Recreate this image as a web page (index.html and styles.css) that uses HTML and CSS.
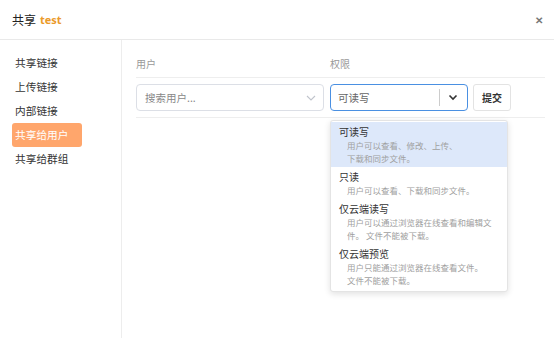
FILE: index.html
```html
<!DOCTYPE html>
<html lang="zh">
<head>
    <meta charset="UTF-8">
    <title>共享</title>
    <link rel="stylesheet" href="styles.css">
</head>
<body>
    <div class="dialog">
        <div class="dialog-head">
            <span class="title">共享</span>
            <span class="name">test</span>
            <span class="close">&#x2715;</span>
        </div>
        <div class="dialog-body">
            <ul class="side">
                <li>共享链接</li>
                <li>上传链接</li>
                <li>内部链接</li>
                <li class="active">共享给用户</li>
                <li>共享给群组</li>
            </ul>
            <div class="main">
                <div class="row head-row">
                    <span class="col-user">用户</span>
                    <span class="col-perm">权限</span>
                </div>
                <div class="row input-row">
                    <div class="col-user user-input">
                        <span>搜索用户...</span>
                        <svg width="10" height="6" viewBox="0 0 10 6"><path d="M1 1l4 4 4-4" fill="none" stroke="#c0c4cc" stroke-width="1.1"/></svg>
                    </div>
                    <div class="col-perm perm-select">
                        <span class="value">可读写</span>
                        <span class="sep"></span>
                        <svg width="10" height="7" viewBox="0 0 10 7"><path d="M1.5 1.5l3.5 3.5 3.5-3.5" fill="none" stroke="#333" stroke-width="1.6"/></svg>
                    </div>
                    <button type="button" class="submit">提交</button>
                </div>
                <ul class="menu">
                    <li class="selected">
                        <div class="opt">可读写</div>
                        <div class="desc">用户可以查看、修改、上传、<br>下载和同步文件。</div>
                    </li>
                    <li>
                        <div class="opt">只读</div>
                        <div class="desc">用户可以查看、下载和同步文件。</div>
                    </li>
                    <li>
                        <div class="opt">仅云端读写</div>
                        <div class="desc">用户可以通过浏览器在线查看和编辑文<br>件。 文件不能被下载。</div>
                    </li>
                    <li>
                        <div class="opt">仅云端预览</div>
                        <div class="desc">用户只能通过浏览器在线查看文件。<br>文件不能被下载。</div>
                    </li>
                </ul>
            </div>
        </div>
    </div>
</body>
</html>
```

FILE: styles.css
```css
body {
    margin: 0;
    width: 554px;
    height: 338px;
    overflow: hidden;
    background-color: white;
    font-family: "Noto Sans CJK SC", "Noto Sans", sans-serif;
    color: #333;
}
ul {
    list-style: none;
    margin: 0;
    padding: 0;
}
.dialog {
    display: flex;
    flex-direction: column;
    height: 338px;
}
.dialog-head {
    display: flex;
    align-items: center;
    height: 39px;
    padding: 0 12px;
    border-bottom: 1px solid #e9e9e9;
    gap: 4px;
}
.dialog-head .title {
    font-size: 12px;
    color: #222;
}
.dialog-head .name {
    font-size: 11px;
    font-weight: bold;
    color: #eb9a2a;
    font-family: "Open Sans", sans-serif;
}
.dialog-head .close {
    margin-left: auto;
    margin-right: -1px;
    font-size: 10px;
    font-weight: bold;
    color: #777;
}
.dialog-body {
    display: flex;
    flex: 1;
}
.side {
    width: 122px;
    border-right: 1px solid #ededed;
    padding-top: 11px;
    box-sizing: border-box;
}
.side>li {
    width: 70px;
    height: 24px;
    line-height: 24px;
    margin-left: 12px;
    padding-left: 3px;
    box-sizing: border-box;
    font-size: 10.7px;
    color: #333;
    border-radius: 3px;
}
.side>li.active {
    background-color: #ffa66c;
    color: white;
}
.main {
    flex: 1;
    position: relative;
    padding: 11px 9px 0 14px;
}
.row {
    display: flex;
    gap: 6px;
}
.head-row {
    height: 26px;
    line-height: 26px;
    font-size: 10px;
    color: #999;
    border-bottom: 1px solid #eee;
}
.input-row {
    padding: 6px 0;
    border-bottom: 1px solid #eee;
}
.col-user {
    width: 188px;
    box-sizing: border-box;
}
.col-perm {
    width: 138px;
    box-sizing: border-box;
}
.user-input {
    display: flex;
    align-items: center;
    justify-content: space-between;
    height: 27px;
    padding: 0 7px 0 8px;
    border: 1px solid #dcdfe6;
    border-radius: 4px;
    font-size: 10.5px;
    color: #888;
}
.perm-select {
    display: flex;
    align-items: center;
    height: 27px;
    padding: 0 9px 0 7px;
    border: 1px solid #4a90e2;
    border-radius: 4px;
    font-size: 10.5px;
    color: #666;
}
.perm-select .value {
    flex: 1;
}
.perm-select .sep {
    width: 1px;
    height: 17px;
    background-color: #ccc;
    margin-right: 8px;
}
.submit {
    width: 38px;
    height: 27px;
    margin-left: -1px;
    border: 1px solid #e3e3e3;
    border-radius: 3px;
    background-color: white;
    font-family: inherit;
    font-size: 10px;
    font-weight: bold;
    color: #333;
    padding: 0;
}
.menu {
    position: absolute;
    top: 80px;
    left: 208px;
    width: 176px;
    padding: 1px 0 2px;
    border: 1px solid #e4e4e4;
    border-radius: 3px;
    background-color: white;
    box-shadow: 0 2px 6px rgba(0, 0, 0, 0.12);
}
.menu>li {
    padding: 2px 8px;
}
.menu>li.selected {
    background-color: #dde8fa;
}
.opt {
    font-size: 10px;
    line-height: 15px;
    color: #333;
}
.desc {
    padding-left: 8px;
    font-size: 8.5px;
    line-height: 13px;
    color: #a0a0a0;
    white-space: nowrap;
}
```
